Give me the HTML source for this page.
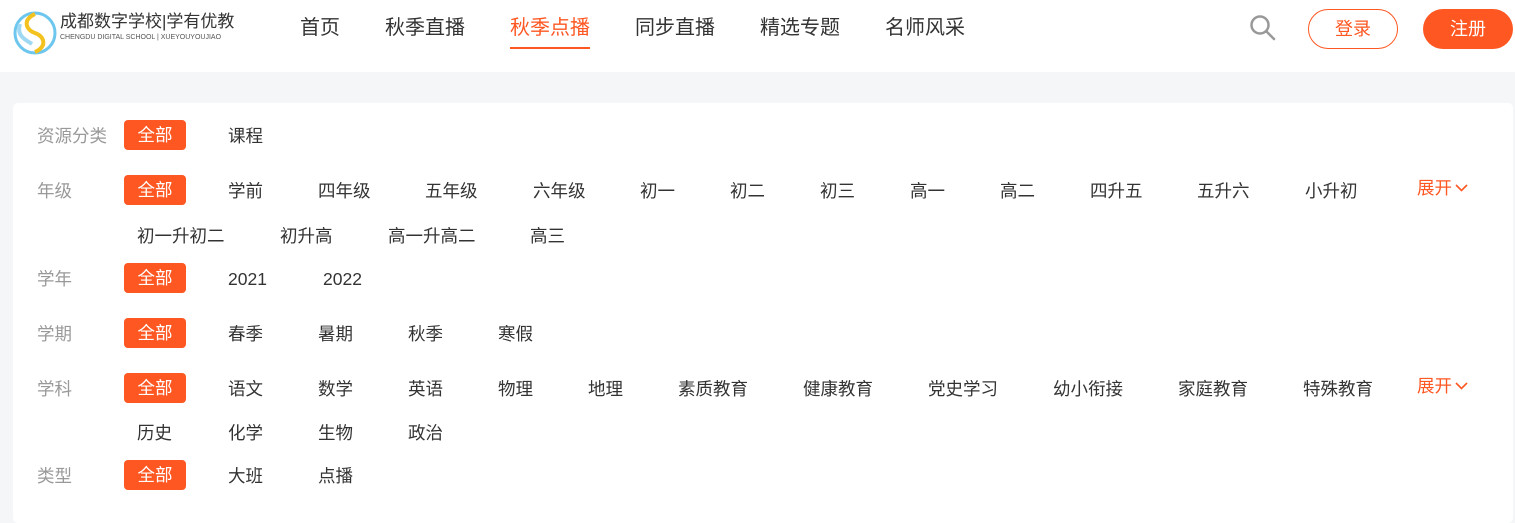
<!DOCTYPE html>
<html><head><meta charset="utf-8"><style>
*{margin:0;padding:0;box-sizing:border-box}
body{width:1515px;height:516px;overflow:hidden;background:#f5f6f7;font-family:"Liberation Sans","Noto Sans CJK SC",sans-serif;position:relative}
.hd{position:absolute;left:0;top:0;width:1515px;height:72px;background:#fff}
.a{position:absolute;white-space:nowrap;line-height:1}
.nav{font-size:20px;color:#333;top:18px}
.card{position:absolute;left:13px;top:103px;width:1500px;height:420px;background:#fff;border-radius:5px}
.l{font-size:17.5px;color:#999;left:37px}
.t{font-size:17.5px;color:#333}
.on{position:absolute;left:124px;width:62px;height:30px;background:#fe5722;border-radius:4px;color:#fff;font-size:17.5px;line-height:30px;text-align:center}
.ex{font-size:17.5px;color:#fe5722}
.ex svg{vertical-align:2px;margin-left:3px}
</style></head><body>
<div class="hd"></div>
<svg class="a" style="left:12px;top:10px" width="46" height="46" viewBox="0 0 46 46">
<circle cx="23" cy="23" r="20" fill="none" stroke="#6cc6ee" stroke-width="3"/>
<path d="M23 4 C10 10 14 20 23 23 C32 26 36 36 23 42" fill="none" stroke="#f3c21e" stroke-width="4"/>
<path d="M8 14 C4 26 14 30 20 34" fill="none" stroke="#9ed8f3" stroke-width="4"/>
</svg>
<div class="a" style="left:60px;top:13px;font-size:17px;color:#333">成都数字学校|学有优教</div>
<div class="a" style="left:60px;top:34px;font-size:7px;color:#555">CHENGDU DIGITAL SCHOOL | XUEYOUYOUJIAO</div>
<div class="a nav" style="left:300px">首页</div>
<div class="a nav" style="left:385px">秋季直播</div>
<div class="a nav" style="left:510px;color:#fe5722">秋季点播</div>
<div class="a" style="left:510px;top:47px;width:80px;height:2px;background:#fe5722"></div>
<div class="a nav" style="left:635px">同步直播</div>
<div class="a nav" style="left:760px">精选专题</div>
<div class="a nav" style="left:885px">名师风采</div>
<svg class="a" style="left:1249px;top:14px" width="28" height="28" viewBox="0 0 28 28"><circle cx="11" cy="11" r="8.5" fill="none" stroke="#999" stroke-width="2.5"/><path d="M17.5 17.5 L25 25" stroke="#999" stroke-width="2.5" stroke-linecap="round"/></svg>
<div class="a" style="left:1308px;top:9px;width:90px;height:40px;border:1px solid #fe5722;border-radius:20px;color:#fe5722;font-size:18px;line-height:38px;text-align:center">登录</div>
<div class="a" style="left:1423px;top:9px;width:90px;height:40px;background:#fe5722;border-radius:20px;color:#fff;font-size:18px;line-height:40px;text-align:center">注册</div>
<div class="card"></div>

<div class="a l" style="top:128px">资源分类</div><div class="on" style="top:120px">全部</div>
<div class="a t" style="left:228px;top:128px">课程</div>

<div class="a l" style="top:183px">年级</div><div class="on" style="top:175px">全部</div>
<div class="a t" style="left:228px;top:183px">学前</div>
<div class="a t" style="left:318px;top:183px">四年级</div>
<div class="a t" style="left:425px;top:183px">五年级</div>
<div class="a t" style="left:533px;top:183px">六年级</div>
<div class="a t" style="left:640px;top:183px">初一</div>
<div class="a t" style="left:730px;top:183px">初二</div>
<div class="a t" style="left:820px;top:183px">初三</div>
<div class="a t" style="left:910px;top:183px">高一</div>
<div class="a t" style="left:1000px;top:183px">高二</div>
<div class="a t" style="left:1090px;top:183px">四升五</div>
<div class="a t" style="left:1197px;top:183px">五升六</div>
<div class="a t" style="left:1305px;top:183px">小升初</div>
<div class="a ex" style="left:1417px;top:180px">展开<svg width="13" height="8" viewBox="0 0 13 8"><path d="M1 1 L6.5 6.5 L12 1" fill="none" stroke="#fe5722" stroke-width="1.6"/></svg></div>
<div class="a t" style="left:137px;top:228px">初一升初二</div>
<div class="a t" style="left:280px;top:228px">初升高</div>
<div class="a t" style="left:388px;top:228px">高一升高二</div>
<div class="a t" style="left:530px;top:228px">高三</div>

<div class="a l" style="top:271px">学年</div><div class="on" style="top:263px">全部</div>
<div class="a t" style="left:228px;top:271px">2021</div>
<div class="a t" style="left:323px;top:271px">2022</div>

<div class="a l" style="top:326px">学期</div><div class="on" style="top:318px">全部</div>
<div class="a t" style="left:228px;top:326px">春季</div>
<div class="a t" style="left:318px;top:326px">暑期</div>
<div class="a t" style="left:408px;top:326px">秋季</div>
<div class="a t" style="left:498px;top:326px">寒假</div>

<div class="a l" style="top:381px">学科</div><div class="on" style="top:373px">全部</div>
<div class="a t" style="left:228px;top:381px">语文</div>
<div class="a t" style="left:318px;top:381px">数学</div>
<div class="a t" style="left:408px;top:381px">英语</div>
<div class="a t" style="left:498px;top:381px">物理</div>
<div class="a t" style="left:588px;top:381px">地理</div>
<div class="a t" style="left:678px;top:381px">素质教育</div>
<div class="a t" style="left:803px;top:381px">健康教育</div>
<div class="a t" style="left:928px;top:381px">党史学习</div>
<div class="a t" style="left:1053px;top:381px">幼小衔接</div>
<div class="a t" style="left:1178px;top:381px">家庭教育</div>
<div class="a t" style="left:1303px;top:381px">特殊教育</div>
<div class="a ex" style="left:1417px;top:378px">展开<svg width="13" height="8" viewBox="0 0 13 8"><path d="M1 1 L6.5 6.5 L12 1" fill="none" stroke="#fe5722" stroke-width="1.6"/></svg></div>
<div class="a t" style="left:137px;top:425px">历史</div>
<div class="a t" style="left:228px;top:425px">化学</div>
<div class="a t" style="left:318px;top:425px">生物</div>
<div class="a t" style="left:408px;top:425px">政治</div>

<div class="a l" style="top:468px">类型</div><div class="on" style="top:460px">全部</div>
<div class="a t" style="left:228px;top:468px">大班</div>
<div class="a t" style="left:318px;top:468px">点播</div>
</body></html>
